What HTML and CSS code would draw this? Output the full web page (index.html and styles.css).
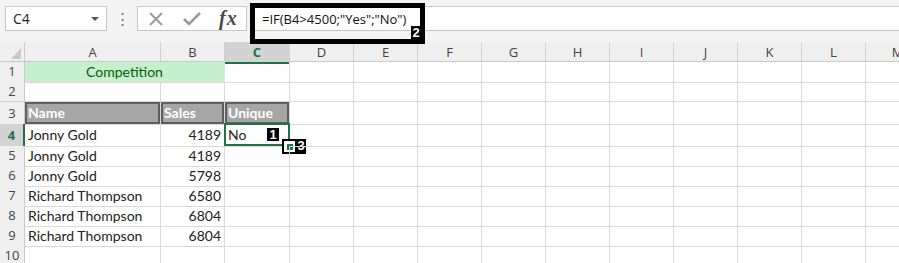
FILE: index.html
```html
<!DOCTYPE html>
<html lang="en">
  <head>
    <meta charset="UTF-8" />
    <title>IF formula</title>
    <link rel="stylesheet" href="styles.css">
  </head>
  <body>
    <div class="toolbar">
      <div class="namebox">
        <span>C4</span>
        <span class="caret"></span>
      </div>
      <div class="grip">&#8942;</div>
      <div class="fxbox">
        <svg class="ico" width="16" height="16" viewBox="0 0 16 16">
          <path d="M2 2 L14 14 M14 2 L2 14" stroke="#9b9b9b" stroke-width="2" fill="none" />
        </svg>
        <svg class="ico" width="18" height="16" viewBox="0 0 18 16">
          <path d="M1 8 L6 13 L17 2" stroke="#9b9b9b" stroke-width="2.6" fill="none" />
        </svg>
        <span class="fx">fx</span>
      </div>
      <div class="formula">=IF(B4&gt;4500;"Yes";"No")</div>
      <div class="callout callout-formula"><span class="tag">2</span></div>
    </div>

    <div class="sheet">
      <div class="row head">
        <div class="corner">
          <svg width="10" height="11" viewBox="0 0 10 11"><path d="M10 0 L10 11 L0 11 Z" fill="#c9c9c9" /></svg>
        </div>
        <div class="ch">A</div><div class="ch">B</div><div class="ch sel">C</div>
        <div class="ch">D</div><div class="ch">E</div><div class="ch">F</div>
        <div class="ch">G</div><div class="ch">H</div><div class="ch">I</div>
        <div class="ch">J</div><div class="ch">K</div><div class="ch">L</div>
        <div class="ch">M</div>
      </div>

      <div class="row">
        <div class="rh">1</div>
        <div class="c good span2">Competition</div>
        <div class="c"></div><div class="c"></div><div class="c"></div><div class="c"></div>
        <div class="c"></div><div class="c"></div><div class="c"></div><div class="c"></div>
        <div class="c"></div><div class="c"></div><div class="c"></div>
      </div>

      <div class="row">
        <div class="rh">2</div>
        <div class="c"></div><div class="c"></div><div class="c"></div><div class="c"></div>
        <div class="c"></div><div class="c"></div><div class="c"></div><div class="c"></div>
        <div class="c"></div><div class="c"></div><div class="c"></div><div class="c"></div>
        <div class="c"></div>
      </div>

      <div class="row tall">
        <div class="rh">3</div>
        <div class="c th">Name</div><div class="c th">Sales</div><div class="c th">Unique</div>
        <div class="c"></div><div class="c"></div><div class="c"></div><div class="c"></div>
        <div class="c"></div><div class="c"></div><div class="c"></div><div class="c"></div>
        <div class="c"></div><div class="c"></div>
      </div>

      <div class="row tall">
        <div class="rh sel">4</div>
        <div class="c">Jonny Gold</div><div class="c num">4189</div>
        <div class="c active">
          No
          <span class="selection"></span>
          <span class="tag tag-cell">1</span>
          <span class="handle-box"><span class="handle"></span></span>
          <span class="tag tag-handle">3</span>
        </div>
        <div class="c"></div><div class="c"></div><div class="c"></div><div class="c"></div>
        <div class="c"></div><div class="c"></div><div class="c"></div><div class="c"></div>
        <div class="c"></div><div class="c"></div>
      </div>

      <div class="row">
        <div class="rh">5</div>
        <div class="c">Jonny Gold</div><div class="c num">4189</div>
        <div class="c"></div><div class="c"></div><div class="c"></div><div class="c"></div>
        <div class="c"></div><div class="c"></div><div class="c"></div><div class="c"></div>
        <div class="c"></div><div class="c"></div><div class="c"></div>
      </div>

      <div class="row">
        <div class="rh">6</div>
        <div class="c">Jonny Gold</div><div class="c num">5798</div>
        <div class="c"></div><div class="c"></div><div class="c"></div><div class="c"></div>
        <div class="c"></div><div class="c"></div><div class="c"></div><div class="c"></div>
        <div class="c"></div><div class="c"></div><div class="c"></div>
      </div>

      <div class="row">
        <div class="rh">7</div>
        <div class="c">Richard Thompson</div><div class="c num">6580</div>
        <div class="c"></div><div class="c"></div><div class="c"></div><div class="c"></div>
        <div class="c"></div><div class="c"></div><div class="c"></div><div class="c"></div>
        <div class="c"></div><div class="c"></div><div class="c"></div>
      </div>

      <div class="row">
        <div class="rh">8</div>
        <div class="c">Richard Thompson</div><div class="c num">6804</div>
        <div class="c"></div><div class="c"></div><div class="c"></div><div class="c"></div>
        <div class="c"></div><div class="c"></div><div class="c"></div><div class="c"></div>
        <div class="c"></div><div class="c"></div><div class="c"></div>
      </div>

      <div class="row">
        <div class="rh">9</div>
        <div class="c">Richard Thompson</div><div class="c num">6804</div>
        <div class="c"></div><div class="c"></div><div class="c"></div><div class="c"></div>
        <div class="c"></div><div class="c"></div><div class="c"></div><div class="c"></div>
        <div class="c"></div><div class="c"></div><div class="c"></div>
      </div>

      <div class="row">
        <div class="rh">10</div>
        <div class="c"></div><div class="c"></div><div class="c"></div><div class="c"></div>
        <div class="c"></div><div class="c"></div><div class="c"></div><div class="c"></div>
        <div class="c"></div><div class="c"></div><div class="c"></div><div class="c"></div>
        <div class="c"></div>
      </div>
    </div>
  </body>
</html>
```

FILE: styles.css
```css
* {
  margin: 0;
  padding: 0;
  box-sizing: border-box;
}

body {
  width: 899px;
  height: 263px;
  overflow: hidden;
  background: #ffffff;
  font-family: "Open Sans", "Noto Sans", sans-serif;
  color: #222;
}

/* formula bar strip */

.toolbar {
  position: relative;
  height: 42px;
  background: #f3f3f3;
  display: flex;
  align-items: flex-start;
  padding-top: 6px;
  padding-left: 5px;
}

.namebox {
  width: 102px;
  height: 25px;
  background: #fff;
  border: 1px solid #c6c6c6;
  display: flex;
  align-items: center;
  justify-content: space-between;
  padding: 0 7px 0 7px;
  font-size: 14px;
}

.caret {
  width: 0;
  height: 0;
  border-left: 4px solid transparent;
  border-right: 4px solid transparent;
  border-top: 4px solid #555;
}

.grip {
  width: 30px;
  height: 25px;
  text-align: center;
  line-height: 25px;
  font-size: 15px;
  color: #6a6a6a;
}

.fxbox {
  width: 110px;
  height: 25px;
  background: #fff;
  border: 1px solid #c6c6c6;
  display: flex;
  align-items: center;
  gap: 19px;
  padding-left: 10px;
}

.fx {
  font-family: "Liberation Serif", "DejaVu Serif", serif;
  font-style: italic;
  font-size: 20px;
  font-weight: bold;
  color: #4a4a4a;
  margin-left: -1px;
  letter-spacing: 1px;
}

.formula {
  flex: 1;
  height: 25px;
  margin-left: 3px;
  background: #fff;
  border-top: 1px solid #c6c6c6;
  border-bottom: 1px solid #c6c6c6;
  border-left: 1px solid #c6c6c6;
  padding-left: 11px;
  font-size: 13px;
  line-height: 24px;
  color: #111;
}

.callout {
  position: absolute;
  border: 5px solid #000;
}

.callout-formula {
  left: 250px;
  top: 3px;
  width: 175px;
  height: 41px;
}

.tag {
  position: absolute;
  background: #000;
  color: #fff;
  font-family: "Liberation Sans", Arial, sans-serif;
  font-weight: bold;
  font-size: 13px;
  line-height: 14px;
  text-align: center;
}

.callout-formula .tag {
  right: -1px;
  bottom: -1px;
  width: 10px;
  height: 14px;
}

/* grid */

.sheet {
  --cols: 25px 136px 64px 65px repeat(10, 64px);
}

.row {
  display: grid;
  grid-template-columns: var(--cols);
  height: 20px;
}

.row.tall {
  height: 22px;
}

.head {
  background: #efefef;
  border-bottom: 1px solid #c9c9c9;
}

.corner {
  border-right: 1px solid #c9c9c9;
  display: flex;
  align-items: flex-end;
  justify-content: flex-end;
  padding: 0 3px 5px 0;
}

.ch {
  border-right: 1px solid #d0d0d0;
  text-align: center;
  font-size: 13px;
  line-height: 20px;
  color: #444;
}

.ch.sel {
  background: #d3d3d3;
  color: #217346;
  font-weight: bold;
  border-bottom: 2px solid #217346;
}

.rh {
  background: #efefef;
  border-right: 1px solid #c9c9c9;
  border-bottom: 1px solid #d0d0d0;
  text-align: center;
  font-size: 13px;
  line-height: 19px;
  color: #444;
}

.tall .rh {
  line-height: 22px;
}

.rh.sel {
  background: #d3d3d3;
  color: #217346;
  font-weight: bold;
  border-right: 2px solid #217346;
}

.c {
  position: relative;
  border-right: 1px solid #d9d9d9;
  border-bottom: 1px solid #d9d9d9;
  font-family: "Lato", "Open Sans", sans-serif;
  font-size: 14px;
  line-height: 20px;
  padding: 0 3px;
  white-space: nowrap;
}

.tall .c {
  line-height: 22px;
}

.num {
  text-align: right;
}

.span2 {
  grid-column: span 2;
}

.good {
  background: #c6efce;
  color: #006100;
  text-align: center;
  border-right-color: #c6efce;
}

.th {
  background: #a6a6a6;
  color: #fff;
  font-weight: bold;
  box-shadow: inset 0 0 0 2px #5e5e5e;
}

.selection {
  position: absolute;
  left: -1px;
  top: -1px;
  width: 66px;
  height: 23px;
  border: 2px solid #217346;
}

.tag-cell {
  left: 42px;
  top: 4px;
  width: 12px;
  height: 13px;
}

.handle-box {
  position: absolute;
  left: 57px;
  top: 15px;
  width: 15px;
  height: 15px;
  border: 2px solid #000;
  background: #fff;
  display: flex;
  align-items: center;
  justify-content: center;
}

.handle {
  width: 6px;
  height: 6px;
  background: #217346;
}

.tag-handle {
  left: 71px;
  top: 15px;
  width: 10px;
  height: 15px;
}
```
